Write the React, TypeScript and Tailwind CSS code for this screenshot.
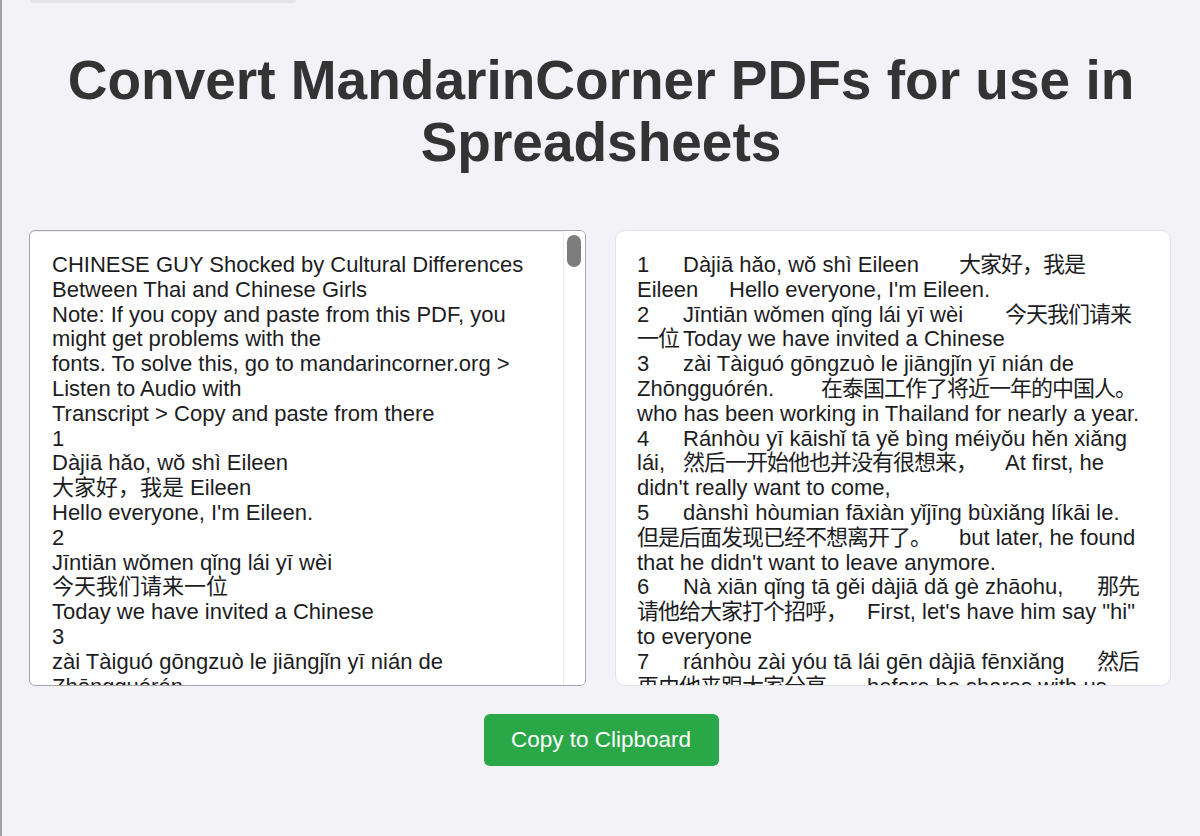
import React from "react";

const leftText = `CHINESE GUY Shocked by Cultural Differences Between Thai and Chinese Girls
Note: If you copy and paste from this PDF, you might get problems with the
fonts. To solve this, go to mandarincorner.org > Listen to Audio with
Transcript > Copy and paste from there
1
Dàjiā hǎo, wǒ shì Eileen
大家好，我是 Eileen
Hello everyone, I'm Eileen.
2
Jīntiān wǒmen qǐng lái yī wèi
今天我们请来一位
Today we have invited a Chinese
3
zài Tàiguó gōngzuò le jiāngjǐn yī nián de
Zhōngguórén.
在泰国工作了将近一年的中国人。
who has been working in Thailand for nearly a year.
4
Ránhòu yī kāishǐ tā yě bìng méiyǒu hěn xiǎng lái,
然后一开始他也并没有很想来，
At first, he didn't really want to come,`;

const rightText = `1\tDàjiā hǎo, wǒ shì Eileen\t大家好，我是 Eileen\tHello everyone, I'm Eileen.
2\tJīntiān wǒmen qǐng lái yī wèi\t今天我们请来一位\tToday we have invited a Chinese
3\tzài Tàiguó gōngzuò le jiāngjǐn yī nián de Zhōngguórén.\t在泰国工作了将近一年的中国人。\twho has been working in Thailand for nearly a year.
4\tRánhòu yī kāishǐ tā yě bìng méiyǒu hěn xiǎng lái,\t然后一开始他也并没有很想来，\tAt first, he didn't really want to come,
5\tdànshì hòumian fāxiàn yǐjīng bùxiǎng líkāi le.\t但是后面发现已经不想离开了。\tbut later, he found that he didn't want to leave anymore.
6\tNà xiān qǐng tā gěi dàjiā dǎ gè zhāohu,\t那先请他给大家打个招呼，\tFirst, let's have him say "hi" to everyone
7\tránhòu zài yóu tā lái gēn dàjiā fēnxiǎng\t然后再由他来跟大家分享，\tbefore he shares with us
8\ttā zài Tàiguó de shēnghuó.\t他在泰国的生活。\this life in Thailand.`;

const cjkRe = /([\u3000-\u303f\u4e00-\u9fff\uff00-\uffef]+)/;

function renderCjk(text: string) {
  return text.split(cjkRe).map((p, i) =>
    i % 2 === 1 ? (
      <span key={i} className="tracking-[-1px]">
        {p}
      </span>
    ) : (
      <React.Fragment key={i}>{p}</React.Fragment>
    )
  );
}

export default function App() {
  return (
    <div className="min-h-[836px] bg-[#f2f2f7] border-l-2 border-[#a3a3a6] font-['Liberation_Sans','Noto_Sans_CJK_SC',sans-serif]">
      <div className="ml-[28px] w-[266px] h-[3px] bg-[#e4e4e9] rounded-b-[3px]" />
      <h1 className="mt-[46px] px-[20px] text-center text-[55px] leading-[62px] font-bold text-[#333333]">
        Convert MandarinCorner PDFs for use in Spreadsheets
      </h1>
      <div className="mt-[57px] px-[27px] grid grid-cols-[557px_556px] gap-[29px]">
        <div className="relative h-[456px]">
          <textarea
            readOnly
            defaultValue={leftText}
            className="block w-full h-full resize-none overflow-hidden rounded-[6px] border border-[#a6a6a8] bg-white pl-[22px] pr-[44px] pt-[22px] text-[22px] leading-[24.8px] text-[#1d1d1f] outline-none shadow-[inset_0_1px_1px_rgba(0,0,0,0.08)]"
          />
          <div className="absolute top-[1px] right-[1px] bottom-[1px] w-[22px] border-l border-[#ededef] bg-white rounded-r-[5px]">
            <div className="ml-[3px] mt-[4px] w-[14px] h-[32px] rounded-full bg-[#7d7d7d]" />
          </div>
        </div>
        <div className="h-[456px] overflow-hidden rounded-[10px] border border-[#e3e3e8] bg-white pl-[21px] pr-[20px] pt-[22px] text-[22px] leading-[24.8px] text-[#1d1d1f] whitespace-pre-wrap [tab-size:46px]">
          {renderCjk(rightText)}
        </div>
      </div>
      <div className="mt-[28px] flex justify-center">
        <button className="w-[235px] h-[52px] rounded-[6px] bg-[#2aa847] text-white text-[22.5px]">
          Copy to Clipboard
        </button>
      </div>
    </div>
  );
}
